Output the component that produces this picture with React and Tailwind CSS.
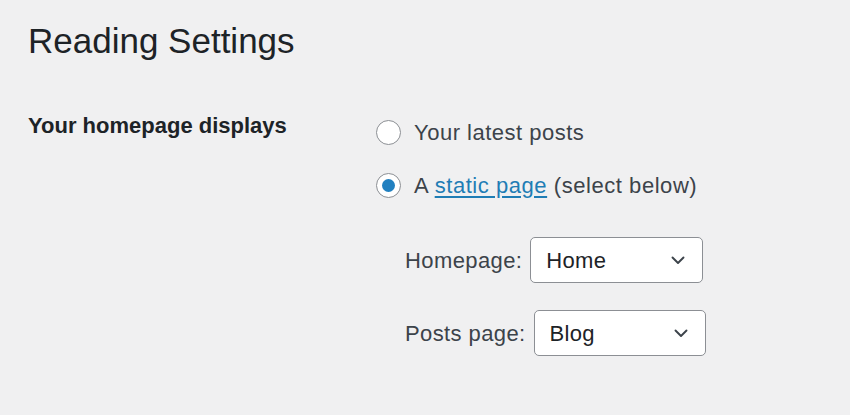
import { useState } from 'react';

const Chevron = () => (
    <svg width="14" height="9" viewBox="0 0 14 9" fill="none" className="shrink-0">
        <path d="M1.5 1.5 L7 7 L12.5 1.5" stroke="#3c434a" strokeWidth="1.9" strokeLinecap="round" strokeLinejoin="round" />
    </svg>
);

const Radio = ({ checked, onClick }) => (
    <span
        onClick={onClick}
        className="w-[25px] h-[25px] rounded-full border-[1.5px] border-[#8c8f94] bg-white flex items-center justify-center shrink-0 cursor-pointer"
    >
        {checked && <span className="w-[13px] h-[13px] rounded-full bg-[#2180c0]" />}
    </span>
);

const PageSelect = ({ label, value, width }) => (
    <div className="flex items-center h-[46px]">
        <span className="text-[22px] tracking-[0.4px] text-[#3c434a] mr-[8px]">{label}</span>
        <div className={`${width} h-[46px] bg-white border border-[#8c8f94] rounded-[5px] flex items-center justify-between pl-[15px] pr-[17px]`}>
            <span className="text-[22px] tracking-[0.3px] text-[#1d2327]">{value}</span>
            <Chevron />
        </div>
    </div>
);

export default function App() {
    const [choice, setChoice] = useState('page');

    return (
        <div className="w-[850px] h-[415px] bg-[#f0f0f1] pl-[28px] overflow-hidden" style={{ fontFamily: '"Liberation Sans", Arial, sans-serif' }}>
            <h1 className="pt-[19px] text-[35px] leading-[44px] text-[#1d2327] font-normal">Reading Settings</h1>

            <div className="flex mt-[51px]">
                {/* label column */}
                <div className="w-[348px] shrink-0">
                    <span className="text-[22px] leading-[24px] font-bold text-[#1d2327]">Your homepage displays</span>
                </div>

                {/* options */}
                <div className="flex flex-col">
                    <label className="flex items-center h-[36px] gap-[13px]">
                        <Radio checked={choice === 'posts'} onClick={() => setChoice('posts')} />
                        <span className="text-[22px] tracking-[0.5px] text-[#3c434a]">Your latest posts</span>
                    </label>
                    <label className="flex items-center h-[36px] gap-[13px] mt-[17px]">
                        <Radio checked={choice === 'page'} onClick={() => setChoice('page')} />
                        <span className="text-[22px] tracking-[0.55px] text-[#3c434a]">
                            A <a href="#" className="text-[#1f7db5] underline underline-offset-[3px]">static page</a> (select below)
                        </span>
                    </label>

                    <div className="pl-[29px] mt-[34px] flex flex-col gap-[27px]">
                        <PageSelect label="Homepage:" value="Home" width="w-[173px]" />
                        <PageSelect label="Posts page:" value="Blog" width="w-[172px]" />
                    </div>
                </div>
            </div>
        </div>
    );
}
